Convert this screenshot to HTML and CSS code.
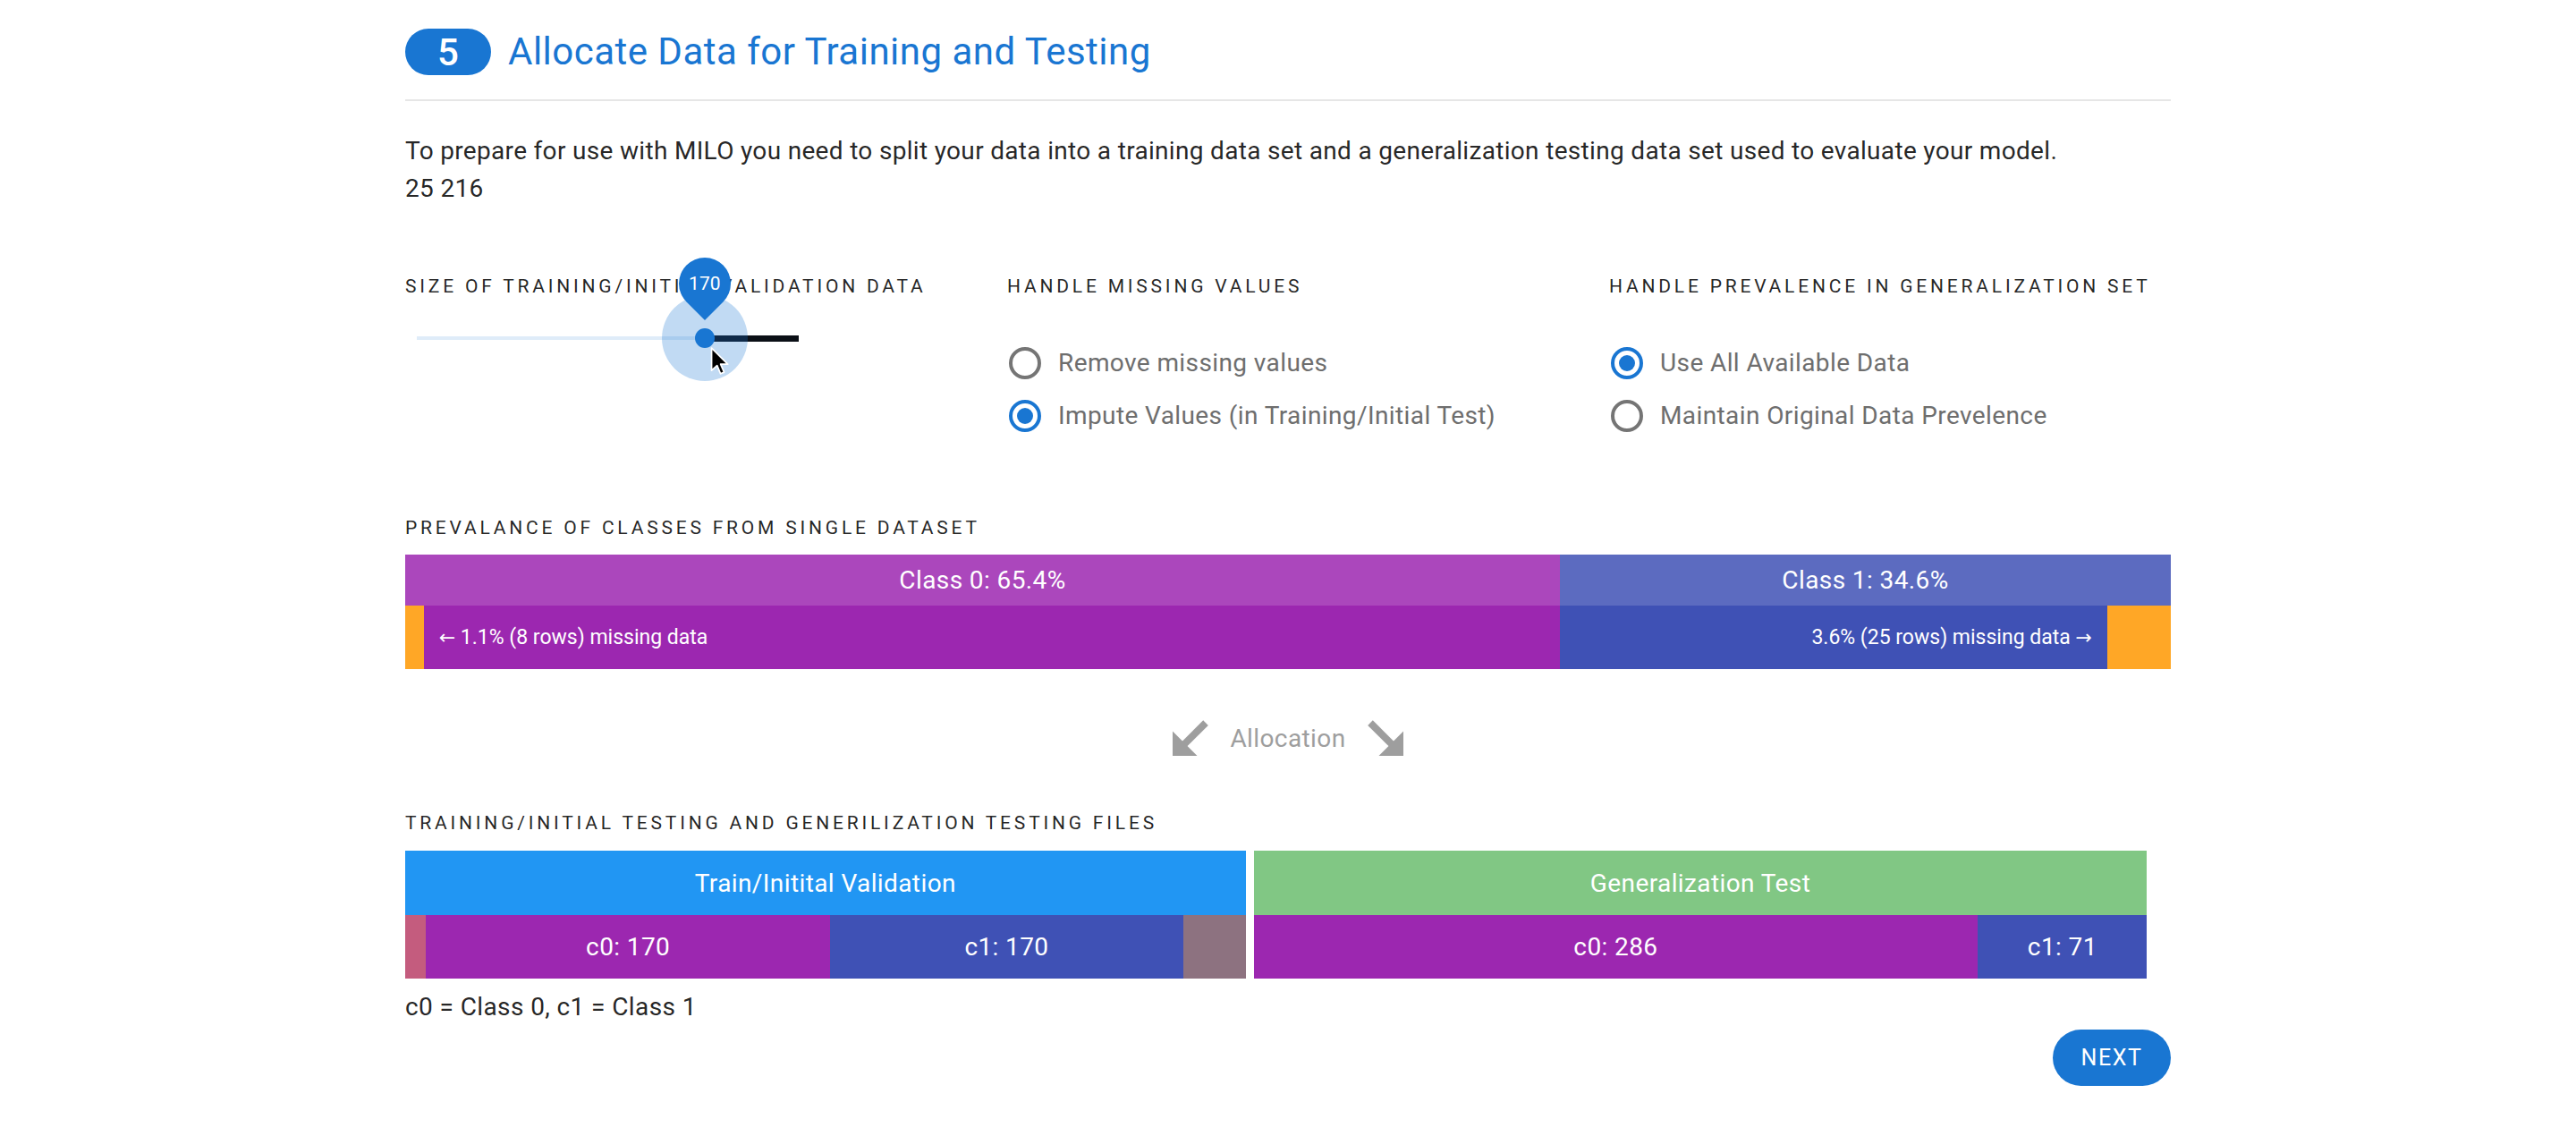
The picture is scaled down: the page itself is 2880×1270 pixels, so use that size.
FILE: index.html
```html
<!DOCTYPE html>
<html lang="en">
<head>
<meta charset="utf-8">
<title>Allocate Data for Training and Testing</title>
<link rel="stylesheet" href="styles.css">
</head>
<body>
<main class="page">
  <header class="step-head">
    <span class="step-badge">5</span>
    <h2 class="step-title">Allocate Data for Training and Testing</h2>
  </header>
  <hr class="divider">
  <p class="intro">To prepare for use with MILO you need to split your data into a training data set and a generalization testing data set used to evaluate your model.<br>25 216</p>

  <div class="options">
    <section class="opt">
      <div class="overline">Size of Training/Initial Validation Data</div>
      <div class="slider">
        <div class="track-left" style="width:75.4%"></div>
        <div class="track-right"></div>
        <div class="halo" style="left:75.4%"></div>
        <div class="thumb" style="left:75.4%"></div>
        <div class="value-label" style="left:75.4%"><span class="value-text">170</span></div>
        <svg class="cursor" viewBox="-1 -1 14 21" width="22" height="34" aria-hidden="true">
          <polygon points="0,0 0,16 3.9,12.4 6.4,18.3 8.9,17.2 6.4,11.5 11.5,11.5" fill="#000" stroke="#fff" stroke-width="1.1" stroke-linejoin="round"/>
        </svg>
      </div>
    </section>
    <section class="opt">
      <div class="overline">Handle Missing Values</div>
      <div class="radios">
        <label class="radio"><span class="radio-icon"></span><span class="radio-text">Remove missing values</span></label>
        <label class="radio checked"><span class="radio-icon"></span><span class="radio-text">Impute Values (in Training/Initial Test)</span></label>
      </div>
    </section>
    <section class="opt">
      <div class="overline">Handle Prevalence in Generalization Set</div>
      <div class="radios">
        <label class="radio checked"><span class="radio-icon"></span><span class="radio-text">Use All Available Data</span></label>
        <label class="radio"><span class="radio-icon"></span><span class="radio-text">Maintain Original Data Prevelence</span></label>
      </div>
    </section>
  </div>

  <div class="overline dist-label">Prevalance of Classes from Single Dataset</div>
  <div class="dist">
    <div class="dist-row dist-top">
      <div class="seg c0-light" style="width:65.4%">Class 0: 65.4%</div>
      <div class="seg c1-light" style="width:34.6%">Class 1: 34.6%</div>
    </div>
    <div class="dist-row dist-bottom">
      <div class="seg missing" style="width:1.05%"></div>
      <div class="seg c0 seg-left" style="width:64.35%"><span class="arr">←</span>&nbsp;1.1% (8 rows) missing data</div>
      <div class="seg c1 seg-right" style="width:31%">3.6% (25 rows) missing data&nbsp;<span class="arr">→</span></div>
      <div class="seg missing" style="width:3.6%"></div>
    </div>
  </div>

  <div class="alloc">
    <svg class="alloc-arrow" viewBox="0 0 40 40" width="40" height="40" aria-hidden="true">
      <polygon points="0,12.5 0,40 27.5,40"/>
      <polygon points="6,28.5 34.2,0.3 39.8,5.9 11.6,34.1"/>
    </svg>
    <span class="alloc-text">Allocation</span>
    <svg class="alloc-arrow" viewBox="0 0 40 40" width="40" height="40" aria-hidden="true">
      <polygon points="40,12.5 40,40 12.5,40"/>
      <polygon points="34,28.5 5.8,0.3 0.2,5.9 28.4,34.1"/>
    </svg>
  </div>

  <div class="overline files-label">Training/Initial Testing and Generilization Testing Files</div>
  <div class="files">
    <div class="file" style="width:47.6%">
      <div class="file-head train">Train/Initital Validation</div>
      <div class="file-body">
        <div class="seg imp0" style="width:2.45%"></div>
        <div class="seg c0" style="width:48.14%">c0: 170</div>
        <div class="seg c1" style="width:41.96%">c1: 170</div>
        <div class="seg imp1" style="width:7.45%"></div>
      </div>
    </div>
    <div class="file" style="width:50.6%">
      <div class="file-head gen">Generalization Test</div>
      <div class="file-body">
        <div class="seg c0" style="width:81.06%">c0: 286</div>
        <div class="seg c1" style="width:18.94%">c1: 71</div>
      </div>
    </div>
  </div>
  <p class="legend">c0 = Class 0, c1 = Class 1</p>
  <div class="actions"><button class="next" type="button">Next</button></div>
</main>
</body>
</html>
```
FILE: styles.css
```css
* { box-sizing: border-box; }

body {
  margin: 0;
  background: #fff;
  font-family: Roboto, "Liberation Sans", Arial, sans-serif;
  color: rgba(0, 0, 0, 0.87);
  letter-spacing: 0.4px;
}

.page {
  width: 1974px;
  margin: 0 auto;
  padding-top: 32px;
}

/* header */
.step-head {
  display: flex;
  align-items: center;
  gap: 19px;
  height: 52px;
}
.step-badge {
  width: 96px;
  height: 52px;
  border-radius: 26px;
  background: #1976d2;
  color: #fff;
  font-size: 42px;
  font-weight: 500;
  letter-spacing: 0;
  display: flex;
  align-items: center;
  justify-content: center;
}
.step-title {
  margin: 0;
  font-size: 42px;
  font-weight: 400;
  line-height: 52px;
  letter-spacing: 0.48px;
  color: #1976d2;
}
.divider {
  border: 0;
  height: 2px;
  background: #e6e6e6;
  margin: 27px 0 0;
}
.intro {
  margin: 35px 0 0;
  font-size: 28px;
  line-height: 42px;
  letter-spacing: 0.32px;
}

/* option columns */
.options {
  display: grid;
  grid-template-columns: 673px 673px 1fr;
  margin-top: 72px;
}
.overline {
  font-size: 21px;
  line-height: 32px;
  letter-spacing: 3.8px;
  text-transform: uppercase;
  white-space: nowrap;
}

/* slider */
.slider {
  position: relative;
  margin-left: 13px;
  width: 427px;
  height: 84px;
  display: flex;
  align-items: center;
}
.track-left {
  height: 4px;
  background: rgba(25, 118, 210, 0.14);
}
.track-right {
  flex: 1;
  height: 7px;
  background: #0b0f16;
}
.halo {
  position: absolute;
  top: 50%;
  width: 96px;
  height: 96px;
  margin: -48px 0 0 -48px;
  border-radius: 50%;
  background: rgba(25, 118, 210, 0.27);
}
.thumb {
  position: absolute;
  top: 50%;
  width: 22px;
  height: 22px;
  margin: -11px 0 0 -11px;
  border-radius: 50%;
  background: #1976d2;
}
.value-label {
  position: absolute;
  top: -48px;
  width: 58px;
  height: 58px;
  margin-left: -29px;
  background: #1976d2;
  border-radius: 50% 50% 50% 0;
  transform: rotate(-45deg);
  display: flex;
  align-items: center;
  justify-content: center;
}
.value-text {
  transform: rotate(45deg);
  color: #fff;
  font-size: 21px;
  letter-spacing: 0;
}
.cursor {
  position: absolute;
  left: 328px;
  top: 51px;
}

/* radios */
.radios {
  margin-top: 40px;
  display: flex;
  flex-direction: column;
}
.radio {
  display: flex;
  align-items: center;
  gap: 19px;
  height: 59px;
  padding-left: 2px;
  font-size: 28px;
  color: #6e6e6e;
}
.radio-icon {
  width: 36px;
  height: 36px;
  border-radius: 50%;
  border: 4px solid #757575;
  display: flex;
  align-items: center;
  justify-content: center;
}
.radio.checked .radio-icon {
  border-color: #1976d2;
}
.radio.checked .radio-icon::after {
  content: "";
  width: 18px;
  height: 18px;
  border-radius: 50%;
  background: #1976d2;
}

/* distribution bar */
.dist-label { margin-top: 80px; }
.dist {
  margin-top: 14px;
  color: #fff;
}
.dist-row {
  display: flex;
}
.dist-top { height: 57px; font-size: 28px; }
.dist-bottom { height: 71px; font-size: 23px; letter-spacing: 0; }
.arr {
  font-family: "DejaVu Sans", sans-serif;
  font-size: 22px;
}
.seg {
  display: flex;
  align-items: center;
  justify-content: center;
  white-space: nowrap;
  color: #fff;
}
.seg-left { justify-content: flex-start; padding-left: 17px; }
.seg-right { justify-content: flex-end; padding-right: 17px; }
.c0-light { background: #ab47bc; }
.c1-light { background: #5c6bc0; }
.c0 { background: #9c27b0; }
.c1 { background: #3f51b5; }
.missing { background: #ffa726; }
.imp0 { background: #c45c7e; }
.imp1 { background: #8d7280; }

/* allocation */
.alloc {
  margin-top: 57px;
  height: 40px;
  display: flex;
  align-items: center;
  justify-content: center;
  gap: 24px;
  color: #9e9e9e;
  font-size: 28px;
}
.alloc-arrow { fill: #9e9e9e; display: block; }

/* files */
.files-label { margin-top: 59px; }
.files {
  margin-top: 15px;
  display: flex;
  gap: 9px;
}
.file-head {
  height: 72px;
  display: flex;
  align-items: center;
  justify-content: center;
  color: #fff;
  font-size: 28px;
}
.train { background: #2196f3; }
.gen { background: #81c784; }
.file-body {
  height: 71px;
  display: flex;
  font-size: 28px;
}
.legend {
  margin: 11px 0 0;
  font-size: 28px;
  line-height: 42px;
}
.actions {
  margin-top: 4px;
  display: flex;
  justify-content: flex-end;
}
.next {
  width: 132px;
  height: 63px;
  border: 0;
  border-radius: 32px;
  background: #1976d2;
  color: #fff;
  font-family: Roboto, "Liberation Sans", Arial, sans-serif;
  font-size: 25px;
  letter-spacing: 1.6px;
  text-transform: uppercase;
  padding: 0;
}
```
